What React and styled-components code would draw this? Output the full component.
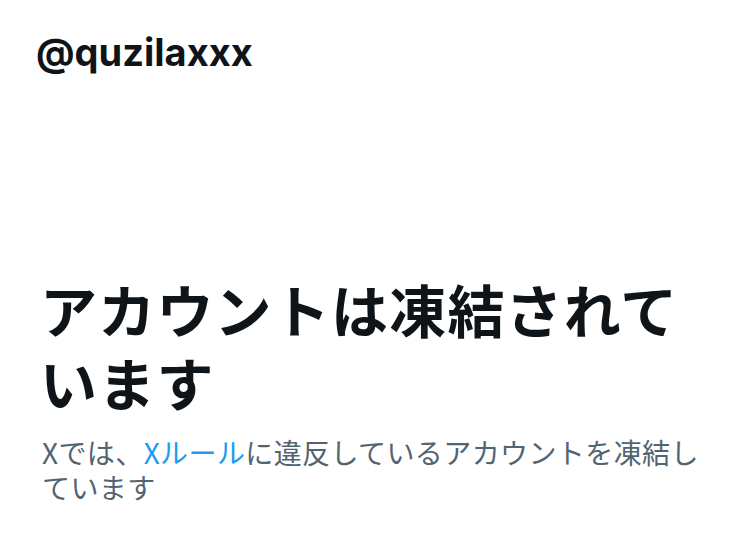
import styled, { createGlobalStyle } from 'styled-components'

const GlobalStyle = createGlobalStyle`
    html, body {
        margin: 0;
        padding: 0;
        background: #ffffff;
    }
`

const Page = styled.div`
    width: 750px;
    height: 541px;
    display: flex;
    flex-direction: column;
    font-family: Inter, "Noto Sans CJK JP", sans-serif;
    color: #0f1419;
    overflow: hidden;
`

const Header = styled.header`
    padding: 30px 36px 0;
`

const Handle = styled.h1`
    margin: 0;
    font-family: Inter, "Noto Sans", sans-serif;
    font-size: 38px;
    font-weight: 700;
    line-height: 44px;
    letter-spacing: 0;
`

const Notice = styled.section`
    padding: 198px 42px 0 42px;
    display: flex;
    flex-direction: column;
    gap: 17px;
`

const Title = styled.h2`
    margin: 0 0 0 -2px;
    font-family: "Noto Sans CJK JP", sans-serif;
    font-size: 57px;
    font-weight: 700;
    line-height: 73px;
    letter-spacing: 1.2px;
`

const Message = styled.p`
    margin: 0;
    font-family: "Noto Sans CJK JP", sans-serif;
    font-size: 28px;
    font-weight: 400;
    line-height: 35px;
    letter-spacing: 0.4px;
    color: #536471;
`

const RuleLink = styled.a`
    color: #1d9bf0;
    text-decoration: none;
`

const App = () => (
    <Page>
        <GlobalStyle />
        <Header>
            <Handle>@quzilaxxx</Handle>
        </Header>
        <Notice>
            <Title>アカウントは凍結されています</Title>
            <Message>
                Xでは、<RuleLink href="#">Xルール</RuleLink>に違反しているアカウントを凍結しています
            </Message>
        </Notice>
    </Page>
)

export default App
